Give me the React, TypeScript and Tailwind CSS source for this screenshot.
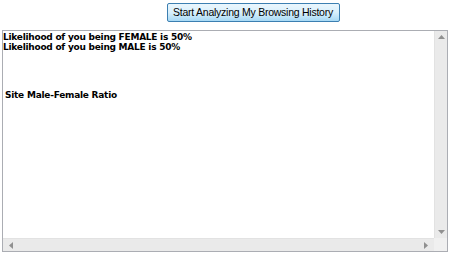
const App = () => {
  return (
    <div className="w-[450px] h-[258px] bg-white relative font-['DejaVu_Sans',sans-serif]">
      <div className="flex justify-center pt-[3px] pl-[56px]">
        <button className="h-[19px] w-[173px] whitespace-nowrap rounded-[2px] border border-[#3c7fb1] bg-gradient-to-b from-[#eaf6fd] via-[#d9f0fc] to-[#a7d9f5] text-[10.5px] tracking-[-0.25px] text-black font-['Liberation_Sans',Arial,sans-serif] leading-none">
          Start Analyzing My Browsing History
        </button>
      </div>
      <div className="mx-[2px] mt-[8px] h-[222px] border border-[#abadb3] flex flex-col">
        <div className="flex flex-1 min-h-0">
          <div className="flex-1 pt-[1px] text-[9px] tracking-[-0.25px] font-bold leading-[10px] text-black">
            <div>Likelihood of you being FEMALE is 50%</div>
            <div>Likelihood of you being MALE is 50%</div>
            <table className="mt-[38px] ml-[2px] border-separate border-spacing-0">
              <thead>
                <tr>
                  <th className="pr-[3px] text-left font-bold">Site</th>
                  <th className="text-left font-bold">Male-Female Ratio</th>
                </tr>
              </thead>
            </table>
          </div>
          <div className="w-[13px] bg-[#eaeaea] flex flex-col justify-between items-center py-[4px] border-l border-[#e2e2e2]">
            <svg width="7" height="4" viewBox="0 0 7 4"><path d="M3.5 0 L7 4 L0 4 Z" fill="#909090" /></svg>
            <svg width="7" height="4" viewBox="0 0 7 4"><path d="M0 0 L7 0 L3.5 4 Z" fill="#909090" /></svg>
          </div>
        </div>
        <div className="flex h-[13px]">
          <div className="flex-1 bg-[#eaeaea] flex justify-between items-center px-[6px] border-t border-[#e2e2e2]">
            <svg width="4" height="7" viewBox="0 0 4 7"><path d="M0 3.5 L4 0 L4 7 Z" fill="#909090" /></svg>
            <svg width="4" height="7" viewBox="0 0 4 7"><path d="M4 3.5 L0 0 L0 7 Z" fill="#909090" /></svg>
          </div>
          <div className="w-[13px] bg-[#f0f0f0]" />
        </div>
      </div>
    </div>
  )
}

export default App
